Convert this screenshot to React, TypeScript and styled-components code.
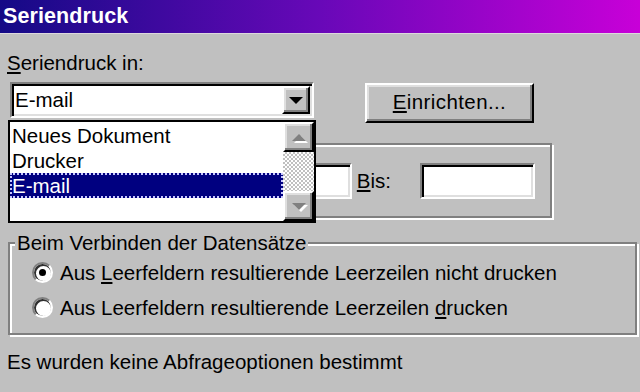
import styled, { createGlobalStyle } from 'styled-components';

const GlobalStyle = createGlobalStyle`
  html, body {
    margin: 0;
    padding: 0;
    background: #c0c0c0;
  }
  body {
    font-family: 'Liberation Sans', Arial, sans-serif;
    font-size: 20.5px;
    color: #000;
  }
`;

const Window = styled.div`
  width: 640px;
  height: 392px;
  overflow: hidden;
  background: #c0c0c0;
  display: flex;
  flex-direction: column;
`;

const TitleBar = styled.div`
  height: 33px;
  flex: none;
  display: flex;
  align-items: center;
  padding-left: 3px;
  background: linear-gradient(90deg, #140a86 0%, #6808b8 50%, #c800d8 100%);
  border-bottom: 1px solid #dcd8dc;
  color: #fff;
  font-weight: bold;
  font-size: 21.5px;
  letter-spacing: 0.1px;
`;

const Body = styled.div`
  display: flex;
  flex-direction: column;
  align-items: flex-start;
  padding: 0 3px 0 8px;
`;

const Label = styled.div<{ $top?: number }>`
  line-height: 24px;
  margin-top: ${(p) => p.$top ?? 0}px;
  margin-left: -1px;
  white-space: nowrap;
`;

const ControlRow = styled.div`
  display: flex;
  align-items: flex-start;
  margin-top: 7px;
`;

const ComboWrap = styled.div`
  position: relative;
  margin-left: 2px;
`;

const sunken = `
  border: 2px solid;
  border-color: #808080 #ffffff #ffffff #808080;
  box-shadow: inset 2px 2px #000000, inset -2px -2px #dfdfdf;
`;

const raised = `
  border: 2px solid;
  border-color: #ffffff #000000 #000000 #ffffff;
  box-shadow: inset -2px -2px #808080, inset 2px 2px #dfdfdf;
  background: #c0c0c0;
`;

const Combo = styled.div`
  ${sunken}
  width: 304px;
  height: 36px;
  box-sizing: border-box;
  background: #fff;
  display: flex;
  align-items: stretch;
  padding: 2px;
`;

const ComboText = styled.div`
  flex: 1;
  line-height: 28px;
  padding-left: 1px;
`;

const ArrowButton = styled.div`
  ${raised}
  width: 28px;
  box-sizing: border-box;
  display: flex;
  align-items: center;
  justify-content: center;
`;

const Arrow = styled.div<{ $dir: 'up' | 'down'; $disabled?: boolean }>`
  width: 0;
  height: 0;
  border-left: 7px solid transparent;
  border-right: 7px solid transparent;
  ${(p) =>
    p.$dir === 'down'
      ? `border-top: 7px solid ${p.$disabled ? '#808080' : '#000'};`
      : `border-bottom: 7px solid ${p.$disabled ? '#808080' : '#000'};`}
  ${(p) => (p.$disabled ? 'filter: drop-shadow(2px 2px 0 #ffffff);' : '')}
`;

const DropList = styled.div`
  position: absolute;
  left: -2px;
  top: 38px;
  width: 308px;
  height: 103px;
  box-sizing: border-box;
  border: 2px solid #000;
  background: #fff;
  display: flex;
  z-index: 5;
`;

const Items = styled.div`
  flex: 1;
  padding-top: 1px;
`;

const Item = styled.div<{ $selected?: boolean }>`
  height: 25px;
  line-height: 25px;
  padding-left: 2px;
  white-space: nowrap;
  ${(p) =>
    p.$selected
      ? `
    background: #000080;
    color: #fff;
    outline: 2px dotted #c8c8ff;
    outline-offset: -2px;
  `
      : ''}
`;

const ScrollBar = styled.div`
  width: 31px;
  display: flex;
  flex-direction: column;
  background: repeating-conic-gradient(#ffffff 0 25%, #c0c0c0 0 50%) 0 0 / 4px 4px;
`;

const ScrollButton = styled.div`
  ${raised}
  height: 30px;
  box-sizing: border-box;
  display: flex;
  align-items: center;
  justify-content: center;
`;

const ScrollTrack = styled.div`
  flex: 1;
`;

const PushButton = styled.div`
  ${raised}
  margin-left: 51px;
  margin-top: 1px;
  width: 169px;
  height: 40px;
  box-sizing: border-box;
  display: flex;
  align-items: center;
  justify-content: center;
  padding-bottom: 2px;
  letter-spacing: 0.4px;
`;

const etched = `
  border: 2px solid #808080;
  box-shadow: inset 2px 2px #ffffff, 2px 2px #ffffff;
  box-sizing: border-box;
`;

const RangeGroup = styled.div`
  ${etched}
  margin-top: 20px;
  margin-left: 2px;
  width: 542px;
  height: 75px;
  display: flex;
  align-items: center;
  justify-content: flex-end;
  padding-right: 15px;
  padding-top: 1px;
`;

const Field = styled.div<{ $width: number }>`
  ${sunken}
  width: ${(p) => p.$width}px;
  height: 36px;
  box-sizing: border-box;
  background: #fff;
`;

const FieldLabel = styled.div<{ $gap: number }>`
  margin-left: 5px;
  margin-right: ${(p) => p.$gap}px;
  line-height: 24px;
`;

const Group = styled.fieldset`
  ${etched}
  margin: 13px 0 0 0;
  width: 629px;
  padding: 0 0 8px 5px;
  min-inline-size: 0;
`;

const Legend = styled.legend`
  padding: 0 2px;
  line-height: 24px;
  background: #c0c0c0;
`;

const RadioRow = styled.div`
  display: flex;
  align-items: center;
  height: 35px;
  margin-left: 17px;
  white-space: nowrap;
`;

const Radio = styled.div<{ $checked?: boolean }>`
  width: 21px;
  height: 21px;
  box-sizing: border-box;
  border-radius: 50%;
  border: 2px solid;
  border-color: #808080 #ffffff #ffffff #808080;
  box-shadow: inset 1px 1px 0 1px #303030;
  background: #fff;
  margin-right: 7px;
  display: flex;
  align-items: center;
  justify-content: center;
  &::after {
    content: '';
    width: 7px;
    height: 7px;
    border-radius: 50%;
    background: ${(p) => (p.$checked ? '#000' : 'transparent')};
  }
`;

export default function App() {
  return (
    <>
      <GlobalStyle />
      <Window>
        <TitleBar>Seriendruck</TitleBar>
        <Body>
          <Label $top={17}>
            <u>S</u>eriendruck in:
          </Label>
          <ControlRow>
            <ComboWrap>
              <Combo>
                <ComboText>E-mail</ComboText>
                <ArrowButton>
                  <Arrow $dir="down" />
                </ArrowButton>
              </Combo>
              <DropList>
                <Items>
                  <Item>Neues Dokument</Item>
                  <Item>Drucker</Item>
                  <Item $selected>E-mail</Item>
                </Items>
                <ScrollBar>
                  <ScrollButton>
                    <Arrow $dir="up" $disabled />
                  </ScrollButton>
                  <ScrollTrack />
                  <ScrollButton>
                    <Arrow $dir="down" $disabled />
                  </ScrollButton>
                </ScrollBar>
              </DropList>
            </ComboWrap>
            <PushButton>
              <span>
                <u>E</u>inrichten...
              </span>
            </PushButton>
          </ControlRow>
          <RangeGroup>
            <FieldLabel $gap={8}>Von:</FieldLabel>
            <Field $width={102} />
            <FieldLabel $gap={29}>
              <u>B</u>is:
            </FieldLabel>
            <Field $width={115} />
          </RangeGroup>
          <Group>
            <Legend>Beim Verbinden der Datensätze</Legend>
            <RadioRow>
              <Radio $checked />
              <span>
                Aus <u>L</u>eerfeldern resultierende Leerzeilen nicht drucken
              </span>
            </RadioRow>
            <RadioRow>
              <Radio />
              <span>
                Aus Leerfeldern resultierende Leerzeilen <u>d</u>rucken
              </span>
            </RadioRow>
          </Group>
          <Label $top={15}>Es wurden keine Abfrageoptionen bestimmt</Label>
        </Body>
      </Window>
    </>
  );
}
